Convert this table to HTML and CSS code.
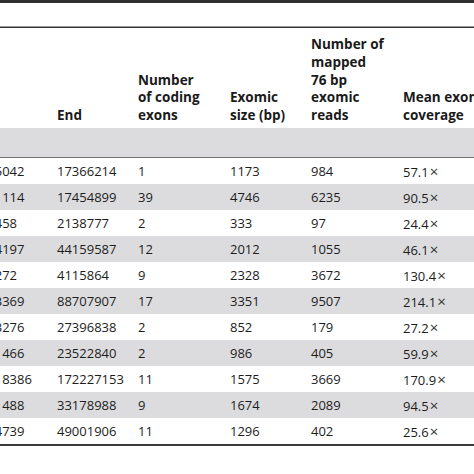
FILE: index.html
```html
<!DOCTYPE html>
<html>
<head>
<meta charset="utf-8">
<link rel="stylesheet" href="styles.css">
</head>
<body>
<div class="page">
  <div class="topbar"></div>
  <div class="caption"></div>
  <div class="rule2"></div>
  <table class="data">
    <colgroup>
      <col class="c1"><col class="c2"><col class="c3"><col class="c4"><col class="c5"><col class="c6">
    </colgroup>
    <thead>
      <tr class="head">
        <th>Start</th>
        <th>End</th>
        <th>Number<br>of coding<br>exons</th>
        <th>Exomic<br>size (bp)</th>
        <th>Number of<br>mapped<br>76 bp<br>exomic<br>reads</th>
        <th>Mean exon<br>coverage</th>
      </tr>
    </thead>
    <tbody>
      <tr class="band"><td></td><td></td><td></td><td></td><td></td><td></td></tr>
      <tr><td>17365042</td><td>17366214</td><td>1</td><td>1173</td><td>984</td><td>57.1<span class="x">×</span></td></tr>
      <tr class="alt"><td>17441114</td><td>17454899</td><td>39</td><td>4746</td><td>6235</td><td>90.5<span class="x">×</span></td></tr>
      <tr><td>2138458</td><td>2138777</td><td>2</td><td>333</td><td>97</td><td>24.4<span class="x">×</span></td></tr>
      <tr class="alt"><td>44144197</td><td>44159587</td><td>12</td><td>2012</td><td>1055</td><td>46.1<span class="x">×</span></td></tr>
      <tr><td>4112272</td><td>4115864</td><td>9</td><td>2328</td><td>3672</td><td>130.4<span class="x">×</span></td></tr>
      <tr class="alt"><td>88703369</td><td>88707907</td><td>17</td><td>3351</td><td>9507</td><td>214.1<span class="x">×</span></td></tr>
      <tr><td>27393276</td><td>27396838</td><td>2</td><td>852</td><td>179</td><td>27.2<span class="x">×</span></td></tr>
      <tr class="alt"><td>23521466</td><td>23522840</td><td>2</td><td>986</td><td>405</td><td>59.9<span class="x">×</span></td></tr>
      <tr><td>172218386</td><td>172227153</td><td>11</td><td>1575</td><td>3669</td><td>170.9<span class="x">×</span></td></tr>
      <tr class="alt"><td>33171488</td><td>33178988</td><td>9</td><td>1674</td><td>2089</td><td>94.5<span class="x">×</span></td></tr>
      <tr class="last"><td>48994739</td><td>49001906</td><td>11</td><td>1296</td><td>402</td><td>25.6<span class="x">×</span></td></tr>
    </tbody>
  </table>
</div>
</body>
</html>
```
FILE: styles.css
```css
html, body {
  margin: 0;
  padding: 0;
  background: #ffffff;
}
.page {
  width: 474px;
  height: 474px;
  overflow: hidden;
  color: #1c1c1c;
  font-family: "Open Sans", "Liberation Sans", sans-serif;
}
.topbar {
  height: 3px;
  background: #2e2e2e;
}
.caption {
  height: 23px;
}
.rule2 {
  height: 0;
  border-top: 1px solid #9a9a9a;
  border-bottom: 1px solid #333333;
}
.data {
  margin-left: -35px;
  border-collapse: collapse;
  table-layout: fixed;
  width: 540px;
}
.c1 { width: 92px; }
.c2 { width: 81px; }
.c3 { width: 92px; }
.c4 { width: 81px; }
.c5 { width: 92px; }
.c6 { width: 102px; }
.head th {
  font-weight: 700;
  font-size: 13.5px;
  line-height: 17.8px;
  text-align: left;
  vertical-align: bottom;
  padding: 0 0 3px 0;
  height: 97px;
  white-space: nowrap;
  color: #1a1a1a;
}
.head th:first-child {
  color: transparent;
}
.band td {
  background: #dcdcde;
  height: 29px;
  padding: 0;
  border-bottom: 1px solid #707070;
}
tbody td {
  font-size: 13px;
  height: 26px;
  padding: 0;
  text-align: left;
  vertical-align: middle;
  white-space: nowrap;
}
.x {
  font-size: 15px;
  margin-left: 1px;
  color: #333333;
}
.alt td {
  background: #dcdcde;
}
.last td {
  border-bottom: 2px solid #3a3a3a;
}
```
